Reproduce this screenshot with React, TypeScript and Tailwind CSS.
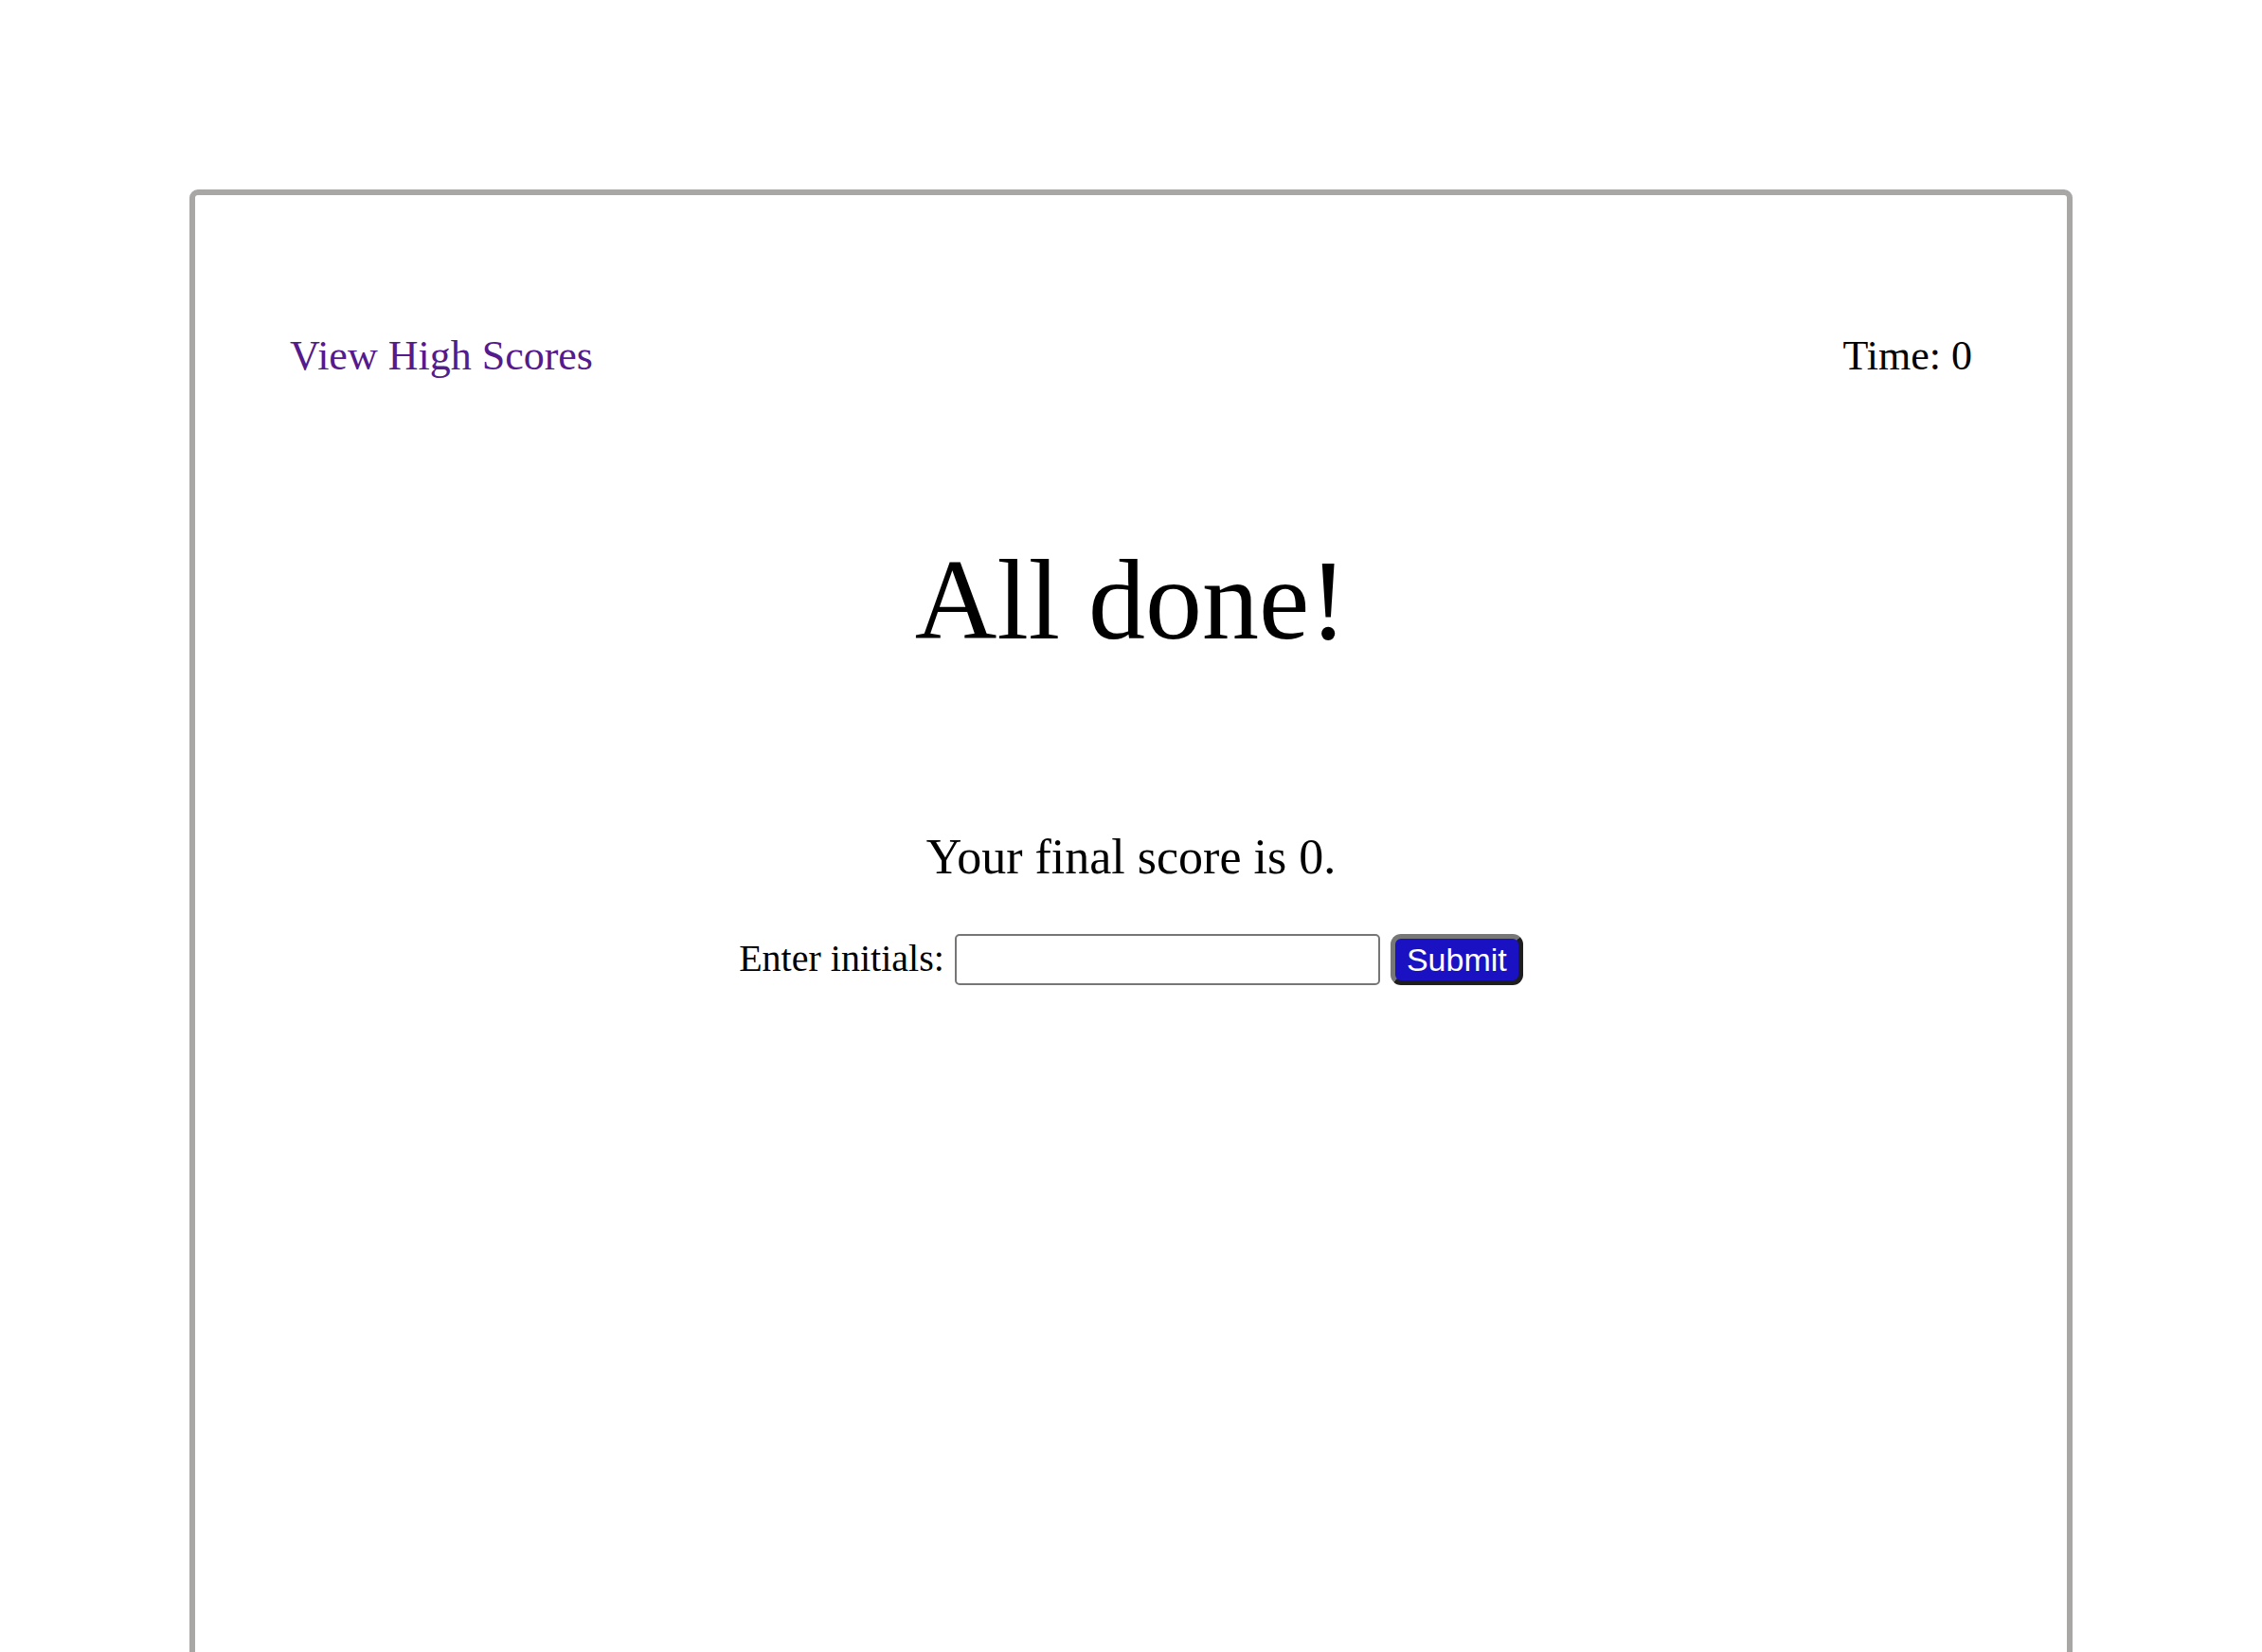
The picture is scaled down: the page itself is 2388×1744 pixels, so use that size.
import React from 'react';

const serif = "font-['Liberation_Serif','Times_New_Roman',serif]";

export default function App() {
  return (
    <div className="h-screen overflow-hidden bg-white pt-[200px]">
      <div className="mx-[200px] h-[1600px] rounded-[9px] border-[6px] border-[#a9a6a6] bg-white">
        <header className={`flex justify-between px-[100px] pt-[148px] text-[44px] leading-none ${serif}`}>
          <a href="#" className="text-[#551a8b]">
            View High Scores
          </a>
          <span className="text-black">Time: 0</span>
        </header>

        <h1 className={`mt-[176px] text-center text-[120px] font-normal leading-none text-black ${serif}`}>
          All done!
        </h1>

        <p className={`mt-[185px] text-center text-[52px] leading-none text-black ${serif}`}>
          Your final score is 0.
        </p>

        <form className="mt-[55px] flex items-start justify-center" onSubmit={(e) => e.preventDefault()}>
          <label className={`mt-[6px] text-[40px] leading-none text-black ${serif}`}>Enter initials:</label>
          <input
            type="text"
            className="ml-[11px] h-[54px] w-[449px] rounded-[5px] border-2 border-[#767676] bg-white px-2 text-[28px]"
          />
          <button
            type="submit"
            className="ml-[11px] h-[54px] w-[140px] rounded-[11px] border-[5px] border-t-[#777777] border-l-[#777777] border-b-[#1e1e1e] border-r-[#1e1e1e] bg-[#1a12c2] font-['Liberation_Sans',Arial,sans-serif] text-[34px] leading-none text-white"
          >
            Submit
          </button>
        </form>
      </div>
    </div>
  );
}
